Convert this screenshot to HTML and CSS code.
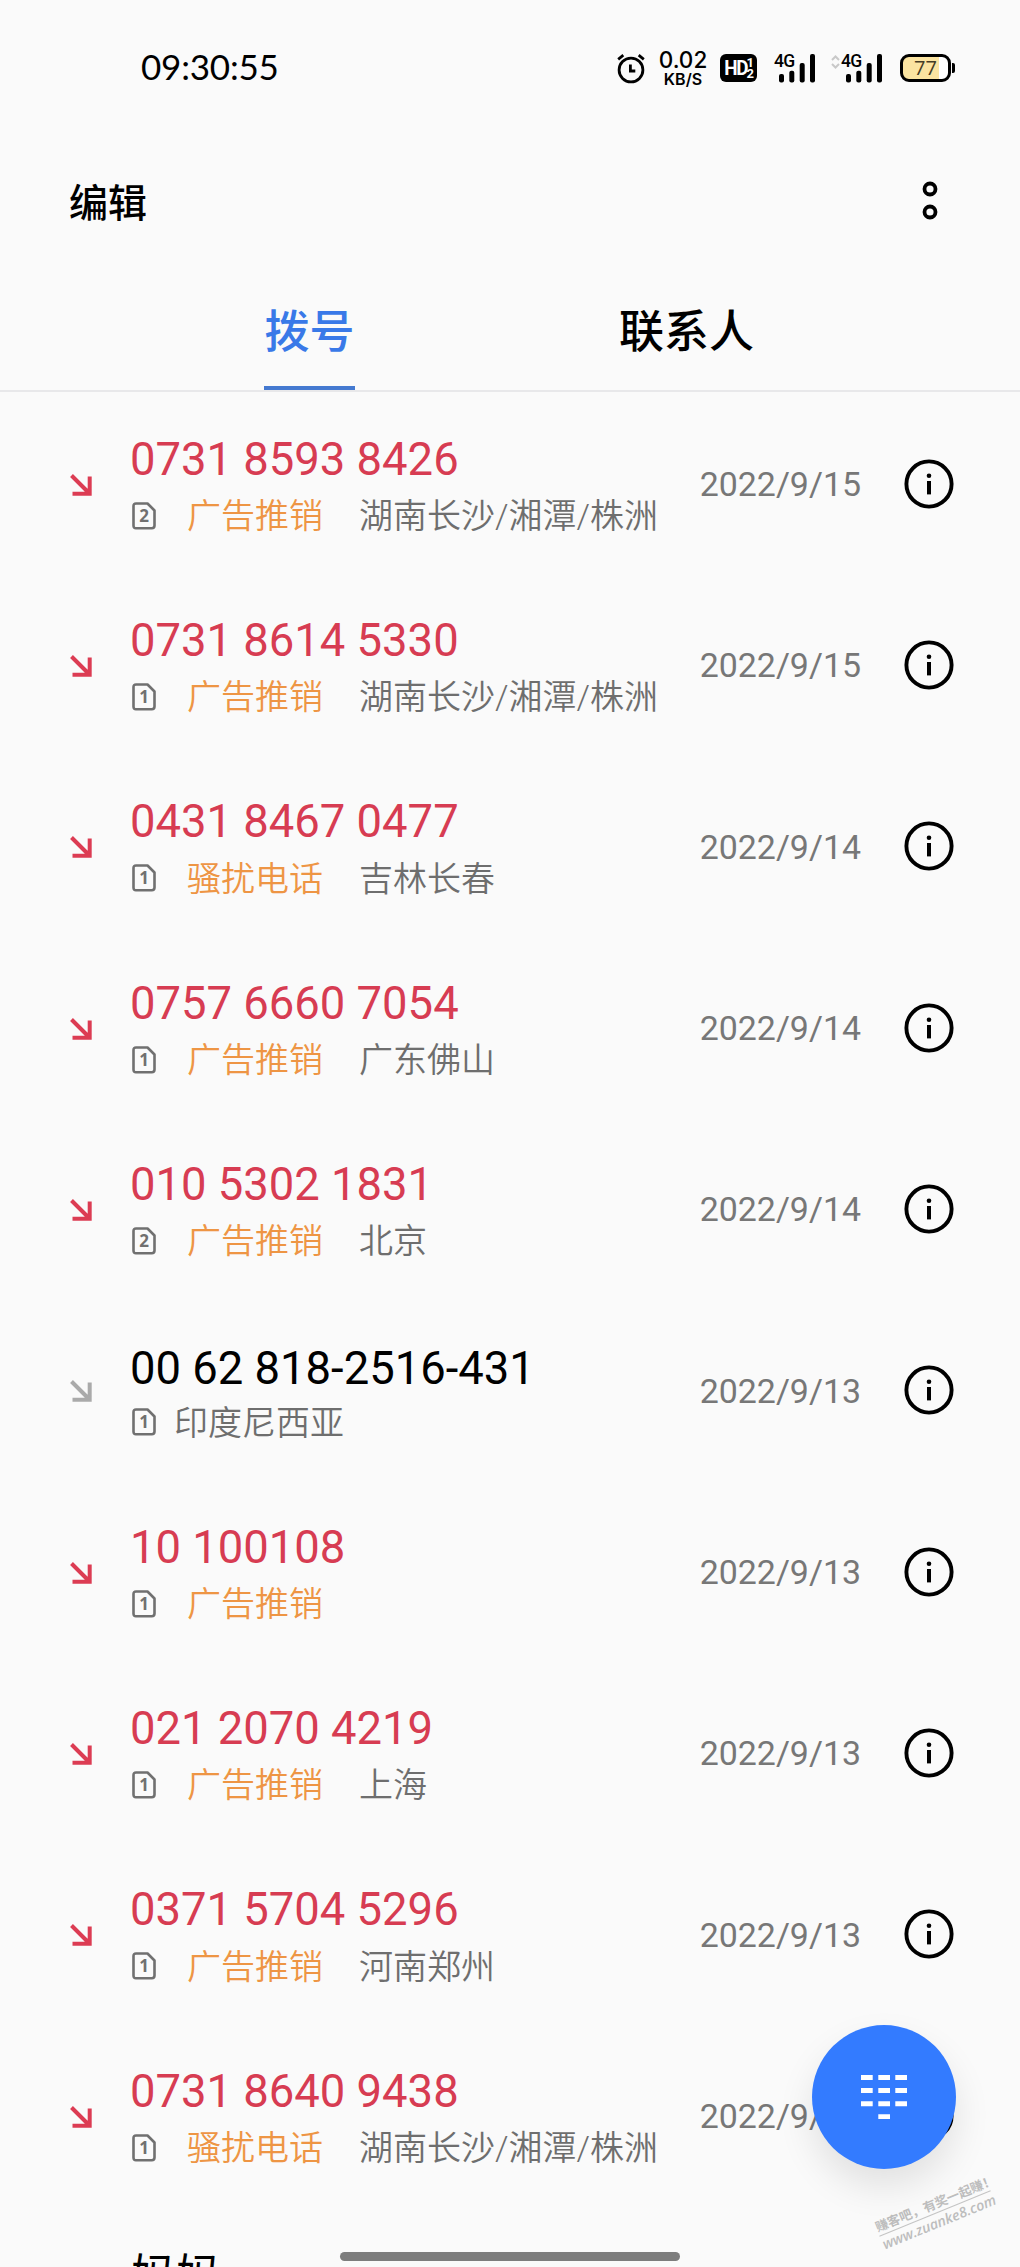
FILE: index.html
```
<!DOCTYPE html>
<html lang="zh-CN">
<head>
<meta charset="utf-8">
<title>拨号</title>
<link rel="stylesheet" href="styles.css">
</head>
<body>
<svg class="sprite" aria-hidden="true">
  <symbol id="arrow" viewBox="0 0 22 22"><path d="M1.5 1.5 L19 19 M19.7 2.5 V19.7 H2.5" fill="none" stroke="currentColor" stroke-width="4"/></symbol>
  <symbol id="sim" viewBox="0 0 24 28"><path d="M4 1.5 H15.5 L22.5 8.5 V23.5 Q22.5 26.2 19.8 26.2 H4 Q1.5 26.2 1.5 23.5 V4 Q1.5 1.5 4 1.5 Z" fill="none" stroke="currentColor" stroke-width="2.6" stroke-linejoin="round"/></symbol>
  <symbol id="info" viewBox="0 0 50 50"><circle cx="25" cy="25" r="22.6" fill="none" stroke="#000" stroke-width="3.9"/><circle cx="25" cy="16.8" r="2.3"/><rect x="23" y="22" width="4" height="13.4"/></symbol>
  <symbol id="signal" viewBox="0 0 38 30"><g fill="#000"><rect x="0" y="20" width="5" height="8.5" rx="2"/><rect x="10.3" y="16.8" width="5" height="11.7" rx="2"/><rect x="20.7" y="9" width="5" height="19.5" rx="2"/><rect x="31" y="0" width="5" height="28.5" rx="2"/></g></symbol>
</svg>
<div class="screen">
  <header class="status">
    <time class="clock">09:30:55</time>
    <div class="status-icons">
      <svg class="alarm" viewBox="0 0 28 30"><g fill="none" stroke="#000"><circle cx="14" cy="16" r="11.9" stroke-width="2.8"/><path d="M1.2 5.3 L6.3 1.2 M26.8 5.3 L21.7 1.2" stroke-width="2.8"/><path d="M13.4 10.5 V17 H18.3" stroke-width="2.8"/></g></svg>
      <div class="speed"><b>0.02</b><span>KB/S</span></div>
      <div class="hd"><b>HD</b><span><i>1</i><i>2</i></span></div>
      <div class="cell first"><b>4G</b><svg><use href="#signal"/></svg></div>
      <div class="cell second"><svg class="updown" viewBox="0 0 9 14"><path d="M1 5 L4.5 1.5 L8 5 M1 9 L4.5 12.5 L8 9" fill="none" stroke="#c8c8c8" stroke-width="2"/></svg><b>4G</b><svg><use href="#signal"/></svg></div>
      <div class="battery"><span>77</span></div>
    </div>
  </header>
  <div class="toolbar">
    <span class="edit">编辑</span>
    <svg class="more" viewBox="0 0 16 40"><g fill="none" stroke="#000" stroke-width="3.8"><circle cx="8" cy="8" r="5.5"/><circle cx="8" cy="31" r="5.5"/></g></svg>
  </div>
  <nav class="tabs"><span class="tab active">拨号</span><span class="tab contacts">联系人</span></nav>
  <main class="list">
    <article class="row"><svg class="arrow"><use href="#arrow"/></svg><div class="call"><div class="number">0731 8593 8426</div><div class="meta"><span class="sim"><svg><use href="#sim"/></svg>2</span><span class="tag">广告推销</span><span>湖南长沙/湘潭/株洲</span></div></div><time>2022/9/15</time><svg class="info"><use href="#info"/></svg></article>
    <article class="row"><svg class="arrow"><use href="#arrow"/></svg><div class="call"><div class="number">0731 8614 5330</div><div class="meta"><span class="sim"><svg><use href="#sim"/></svg>1</span><span class="tag">广告推销</span><span>湖南长沙/湘潭/株洲</span></div></div><time>2022/9/15</time><svg class="info"><use href="#info"/></svg></article>
    <article class="row"><svg class="arrow"><use href="#arrow"/></svg><div class="call"><div class="number">0431 8467 0477</div><div class="meta"><span class="sim"><svg><use href="#sim"/></svg>1</span><span class="tag">骚扰电话</span><span>吉林长春</span></div></div><time>2022/9/14</time><svg class="info"><use href="#info"/></svg></article>
    <article class="row"><svg class="arrow"><use href="#arrow"/></svg><div class="call"><div class="number">0757 6660 7054</div><div class="meta"><span class="sim"><svg><use href="#sim"/></svg>1</span><span class="tag">广告推销</span><span>广东佛山</span></div></div><time>2022/9/14</time><svg class="info"><use href="#info"/></svg></article>
    <article class="row"><svg class="arrow"><use href="#arrow"/></svg><div class="call"><div class="number">010 5302 1831</div><div class="meta"><span class="sim"><svg><use href="#sim"/></svg>2</span><span class="tag">广告推销</span><span>北京</span></div></div><time>2022/9/14</time><svg class="info"><use href="#info"/></svg></article>
    <article class="row plain"><svg class="arrow"><use href="#arrow"/></svg><div class="call"><div class="number">00 62 818-2516-431</div><div class="meta"><span class="sim"><svg><use href="#sim"/></svg>1</span><span>印度尼西亚</span></div></div><time>2022/9/13</time><svg class="info"><use href="#info"/></svg></article>
    <article class="row"><svg class="arrow"><use href="#arrow"/></svg><div class="call"><div class="number">10 100108</div><div class="meta"><span class="sim"><svg><use href="#sim"/></svg>1</span><span class="tag">广告推销</span></div></div><time>2022/9/13</time><svg class="info"><use href="#info"/></svg></article>
    <article class="row"><svg class="arrow"><use href="#arrow"/></svg><div class="call"><div class="number">021 2070 4219</div><div class="meta"><span class="sim"><svg><use href="#sim"/></svg>1</span><span class="tag">广告推销</span><span>上海</span></div></div><time>2022/9/13</time><svg class="info"><use href="#info"/></svg></article>
    <article class="row"><svg class="arrow"><use href="#arrow"/></svg><div class="call"><div class="number">0371 5704 5296</div><div class="meta"><span class="sim"><svg><use href="#sim"/></svg>1</span><span class="tag">广告推销</span><span>河南郑州</span></div></div><time>2022/9/13</time><svg class="info"><use href="#info"/></svg></article>
    <article class="row"><svg class="arrow"><use href="#arrow"/></svg><div class="call"><div class="number">0731 8640 9438</div><div class="meta"><span class="sim"><svg><use href="#sim"/></svg>1</span><span class="tag">骚扰电话</span><span>湖南长沙/湘潭/株洲</span></div></div><time>2022/9/13</time><svg class="info"><use href="#info"/></svg></article>
    <div class="next-name">妈妈</div>
  </main>
  <button class="fab" aria-label="拨号盘"><svg viewBox="0 0 46 44"><path d="M0 2.5h11.7M17.3 2.5H29M34.3 2.5H46M0 15.6h11.7M17.3 15.6H29M34.3 15.6H46M0 28.7h11.7M17.3 28.7H29M34.3 28.7H46M17.3 41.8H29" stroke="#fff" stroke-width="5"/></svg></button>
  <div class="watermark"><span>赚客吧，有奖一起赚！</span><span class="site">www.zuanke8.com</span></div>
  <div class="homebar"></div>
</div>
</body>
</html>
```
FILE: styles.css
```
* { box-sizing: border-box; }
body { margin: 0; background: #fafafa; }
.sprite { position: absolute; width: 0; height: 0; }
.screen {
  position: relative;
  width: 1020px;
  height: 2267px;
  overflow: hidden;
  background: #fafafa;
  color: #000;
  font-family: Roboto, "Noto Sans CJK SC", sans-serif;
}
svg { display: block; flex: none; }

/* status bar */
.status { display: flex; justify-content: space-between; height: 136px; padding: 0 69px 0 141px; }
.clock { font: 400 35px/40px Lato, sans-serif; padding-top: 46px; letter-spacing: -0.2px; }
.status-icons { display: flex; align-items: flex-start; padding-top: 54px; }
.alarm { width: 28px; height: 30px; margin-right: 13px; }
.speed { display: flex; flex-direction: column; align-items: center; width: 50px; margin: -4px 12px 0 0; font-family: Inter, sans-serif; white-space: nowrap; }
.speed b { font-size: 22.5px; line-height: 20px; font-weight: 550; }
.speed span { font-size: 16px; line-height: 19px; font-weight: 600; }
.hd { display: flex; align-items: center; justify-content: center; width: 37px; height: 28px; border-radius: 6px; background: #000; color: #fff; font-family: Roboto, sans-serif; }
.hd b { font-size: 21px; line-height: 28px; font-weight: 700; letter-spacing: -1.5px; transform: scaleX(.9); }
.hd span { display: flex; flex-direction: column; margin-left: -2px; }
.hd i { font: 700 13px/11px Roboto, sans-serif; }
.cell { display: flex; align-items: flex-start; }
.cell b { width: 21px; font: 500 17.5px/14px Roboto, sans-serif; letter-spacing: -0.6px; white-space: nowrap; }
.cell svg { width: 38px; height: 30px; margin-left: -16px; }
.cell .updown { width: 9px; height: 14px; margin: 1px 1px 0 0; }
.first { margin-left: 17px; }
.second { margin-left: 14px; }
.battery { position: relative; display: flex; align-items: center; width: 51px; height: 28px; margin-left: 16px; border: 3px solid #000; border-radius: 9px; background: linear-gradient(90deg, #fbe4a1 36px, #fff 36px); }
.battery::after { content: ""; position: absolute; right: -7px; top: 6px; width: 3px; height: 10px; border-radius: 0 2px 2px 0; background: #000; }
.battery span { width: 45px; text-align: center; font: 400 20px/22px "Open Sans", sans-serif; color: #453c25; }

/* toolbar and tabs */
.toolbar { display: flex; align-items: center; justify-content: space-between; height: 130px; padding: 0 82px 0 69px; }
.edit { padding-top: 5px; font-size: 39px; line-height: 56px; font-weight: 500; }
.more { width: 16px; height: 40px; }
.tabs { display: flex; height: 126px; padding-left: 264px; border-bottom: 2px solid #e8e8ea; font-size: 45px; line-height: 60px; font-weight: 500; }
.tab { height: 124px; padding-top: 37px; }
.active { width: 91px; color: #3979e8; border-bottom: 4px solid #4479d0; text-align: center; }
.contacts { margin-left: 264px; }

/* call log */
.list { padding-top: 2px; }
.row { display: flex; align-items: center; height: 181.33px; padding: 0 66px 0 70px; }
.arrow { width: 22px; height: 22px; color: #dc3c53; }
.call { flex: 1; padding: 2px 0 0 38px; }
.number { font-size: 45.4px; line-height: 60px; color: #d73c52; white-space: pre; }
.meta { display: flex; align-items: center; height: 52px; color: #6e6e6e; font-size: 34px; line-height: 52px; font-weight: 350; white-space: nowrap; }
.meta > span:not(.sim) { padding-top: 1px; }
.sim { position: relative; width: 24px; height: 28px; margin: 0 18px 0 2px; text-align: center; font: 700 17px/28px "Open Sans", sans-serif; color: #707070; }
.sim svg { position: absolute; inset: 0; width: 24px; height: 28px; }
.tag { width: 134px; margin: 0 38px 0 13px; color: #ee9544; }
.row time { color: #777; font-size: 33.9px; line-height: 44px; padding-top: 1px; margin-right: 43px; }
.info { width: 50px; height: 50px; margin-top: -2px; }
.plain .number { color: #000; position: relative; top: 2.5px; }
.plain .arrow { color: #aaa; }
.next-name { padding: 40px 0 0 131px; font-size: 45px; line-height: 60px; }

/* floating layers */
.fab { position: absolute; left: 812px; top: 2025px; display: flex; align-items: center; justify-content: center; width: 144px; height: 144px; padding: 0; border: 0; border-radius: 50%; background: #337bff; box-shadow: 0 18px 36px rgba(0,0,0,.1); }
.fab svg { width: 46px; height: 44px; }
.watermark { position: absolute; left: 875px; top: 2195px; display: flex; flex-direction: column; width: 120px; transform: rotate(-22.2deg); color: #bdbdbd; font: 700 12.8px/18px "Noto Sans CJK SC", sans-serif; white-space: nowrap; }
.site { border-top: 1px solid #c4c4c4; font: italic 600 14.2px/18px "Open Sans", sans-serif; }
.homebar { position: absolute; left: 340px; top: 2252px; width: 340px; height: 9px; border-radius: 5px; background: #7d7d7d; }
```
